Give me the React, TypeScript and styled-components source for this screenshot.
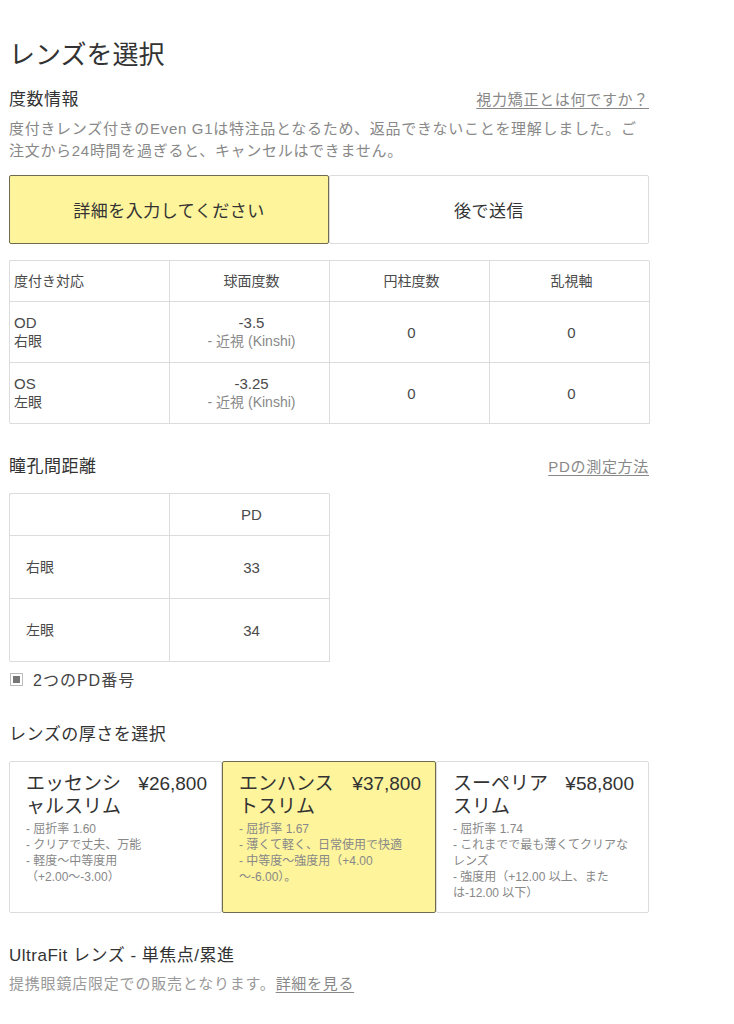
import React from "react";
import styled, { createGlobalStyle } from "styled-components";

const Global = createGlobalStyle`
  html, body { margin: 0; padding: 0; background: #fff; }
  body { font-family: "Liberation Sans", "Noto Sans CJK JP", sans-serif; color: #333; }
  * { box-sizing: border-box; }
`;

const Page = styled.div`
  width: 640px;
  margin: 0 0 0 9px;
  padding-top: 38px;
  display: flex;
  flex-direction: column;
`;

const Title = styled.h1`
  margin: 0;
  font-size: 26px;
  font-weight: 400;
  line-height: 34px;
  color: #333;
`;

const SectionHead = styled.div<{ $mt?: number }>`
  display: flex;
  justify-content: space-between;
  align-items: baseline;
  margin-top: ${(p) => p.$mt ?? 0}px;
`;

const SectionTitle = styled.h2`
  margin: 0;
  font-size: 17px;
  font-weight: 400;
  line-height: 24px;
  letter-spacing: 0.5px;
  color: #333;
`;

const Link = styled.a`
  font-size: 15px;
  letter-spacing: 0.7px;
  color: #888;
  text-decoration: underline;
  text-underline-offset: 3px;
`;

const Note = styled.p`
  margin: 6px 0 0;
  font-size: 15px;
  line-height: 22px;
  letter-spacing: 0.7px;
  color: #888;
  white-space: pre-line;
`;

const Toggle = styled.div`
  display: grid;
  grid-template-columns: 1fr 1fr;
  margin-top: 13px;
`;

const ToggleBtn = styled.button<{ $active?: boolean }>`
  height: 69px;
  font-family: inherit;
  font-size: 17px;
  letter-spacing: 0.5px;
  color: #333;
  background: ${(p) => (p.$active ? "#fdf49c" : "#fff")};
  border: 1px solid ${(p) => (p.$active ? "#6f6b4e" : "#dcdcdc")};
  border-radius: 2px;
  cursor: pointer;
`;

const Table = styled.div<{ $cols: number; $mt?: number }>`
  display: grid;
  grid-template-columns: repeat(${(p) => p.$cols}, 160px);
  border-top: 1px solid #dcdcdc;
  border-left: 1px solid #dcdcdc;
  border-radius: 2px;
  margin-top: ${(p) => p.$mt ?? 0}px;
  width: ${(p) => p.$cols * 160 + 1}px;
`;

const Cell = styled.div<{ $h: number; $align?: "left" | "center"; $pad?: number }>`
  height: ${(p) => p.$h}px;
  display: flex;
  flex-direction: column;
  justify-content: center;
  align-items: ${(p) => (p.$align === "left" ? "flex-start" : "center")};
  padding-left: ${(p) => p.$pad ?? 4}px;
  font-size: 14px;
  line-height: 19px;
  color: #4a4a4a;
  border-right: 1px solid #dcdcdc;
  border-bottom: 1px solid #dcdcdc;
`;

const Value = styled.span`
  font-size: 15px;
`;

const Sub = styled.span`
  font-size: 14px;
  color: #888;
`;

const CheckRow = styled.label`
  display: flex;
  align-items: center;
  gap: 10px;
  margin-top: 6px;
  font-size: 16px;
  letter-spacing: 1px;
  color: #444;
  height: 22px;
`;

const Box = styled.span`
  width: 13px;
  height: 13px;
  border: 1px solid #bbb;
  display: flex;
  align-items: center;
  justify-content: center;
  margin-left: 1px;
  &::after {
    content: "";
    width: 7px;
    height: 7px;
    background: #777;
  }
`;

const Cards = styled.div`
  display: grid;
  grid-template-columns: 213px 214px 213px;
  margin-top: 14px;
`;

const Card = styled.div<{ $active?: boolean }>`
  height: 152px;
  padding: 10px 8px 0 16px;
  background: ${(p) => (p.$active ? "#fdf49c" : "#fff")};
  border: 1px solid ${(p) => (p.$active ? "#6f6b4e" : "#dcdcdc")};
  border-radius: 2px;
`;

const CardHead = styled.div`
  display: flex;
  justify-content: space-between;
  align-items: flex-start;
  padding-right: 6px;
  font-size: 19px;
  line-height: 23px;
  color: #333;
`;

const CardName = styled.span`
  width: 104px;
`;

const CardDesc = styled.div`
  margin-top: 3px;
  font-size: 12px;
  line-height: 16px;
  color: #888;
  white-space: pre;
`;

const Foot = styled.p`
  margin: 5px 0 0;
  font-size: 15px;
  line-height: 22px;
  letter-spacing: 0.8px;
  color: #999;
`;

const rxRows = [
  { k: "OD", j: "右眼", s: "-3.5" },
  { k: "OS", j: "左眼", s: "-3.25" },
];

const cards = [
  {
    name: "エッセンシャルスリム",
    price: "¥26,800",
    desc: "- 屈折率 1.60\n- クリアで丈夫、万能\n- 軽度〜中等度用\n（+2.00〜-3.00）",
  },
  {
    name: "エンハンストスリム",
    price: "¥37,800",
    desc: "- 屈折率 1.67\n- 薄くて軽く、日常使用で快適\n- 中等度〜強度用（+4.00\n〜-6.00）。",
    active: true,
  },
  {
    name: "スーペリアスリム",
    price: "¥58,800",
    desc: "- 屈折率 1.74\n- これまでで最も薄くてクリアな\nレンズ\n- 強度用（+12.00 以上、また\nは-12.00 以下）",
  },
];

export default function App() {
  return (
    <>
      <Global />
      <Page>
        <Title>レンズを選択</Title>
        <SectionHead $mt={16}>
          <SectionTitle>度数情報</SectionTitle>
          <Link>視力矯正とは何ですか？</Link>
        </SectionHead>
        <Note>
          {"度付きレンズ付きのEven G1は特注品となるため、返品できないことを理解しました。ご\n注文から24時間を過ぎると、キャンセルはできません。"}
        </Note>
        <Toggle>
          <ToggleBtn $active>詳細を入力してください</ToggleBtn>
          <ToggleBtn>後で送信</ToggleBtn>
        </Toggle>
        <Table $cols={4} $mt={16}>
          <Cell $h={41} $align="left">度付き対応</Cell>
          <Cell $h={41}>球面度数</Cell>
          <Cell $h={41}>円柱度数</Cell>
          <Cell $h={41}>乱視軸</Cell>
          {rxRows.map((r) => (
            <React.Fragment key={r.k}>
              <Cell $h={61} $align="left">
                <Value>{r.k}</Value>
                <span>{r.j}</span>
              </Cell>
              <Cell $h={61}>
                <Value>{r.s}</Value>
                <Sub>- 近視 (Kinshi)</Sub>
              </Cell>
              <Cell $h={61}>
                <Value>0</Value>
              </Cell>
              <Cell $h={61}>
                <Value>0</Value>
              </Cell>
            </React.Fragment>
          ))}
        </Table>
        <SectionHead $mt={31}>
          <SectionTitle>瞳孔間距離</SectionTitle>
          <Link>PDの測定方法</Link>
        </SectionHead>
        <Table $cols={2} $mt={14}>
          <Cell $h={42} />
          <Cell $h={42}>
            <Value>PD</Value>
          </Cell>
          <Cell $h={63} $align="left" $pad={16}>右眼</Cell>
          <Cell $h={63}>
            <Value>33</Value>
          </Cell>
          <Cell $h={63} $align="left" $pad={16}>左眼</Cell>
          <Cell $h={63}>
            <Value>34</Value>
          </Cell>
        </Table>
        <CheckRow>
          <Box />
          2つのPD番号
        </CheckRow>
        <SectionHead $mt={33}>
          <SectionTitle>レンズの厚さを選択</SectionTitle>
        </SectionHead>
        <Cards>
          {cards.map((c) => (
            <Card key={c.name} $active={c.active}>
              <CardHead>
                <CardName>{c.name}</CardName>
                <span>{c.price}</span>
              </CardHead>
              <CardDesc>{c.desc}</CardDesc>
            </Card>
          ))}
        </Cards>
        <SectionHead $mt={31}>
          <SectionTitle>UltraFit レンズ - 単焦点/累進</SectionTitle>
        </SectionHead>
        <Foot>
          提携眼鏡店限定での販売となります。<Link>詳細を見る</Link>
        </Foot>
      </Page>
    </>
  );
}
